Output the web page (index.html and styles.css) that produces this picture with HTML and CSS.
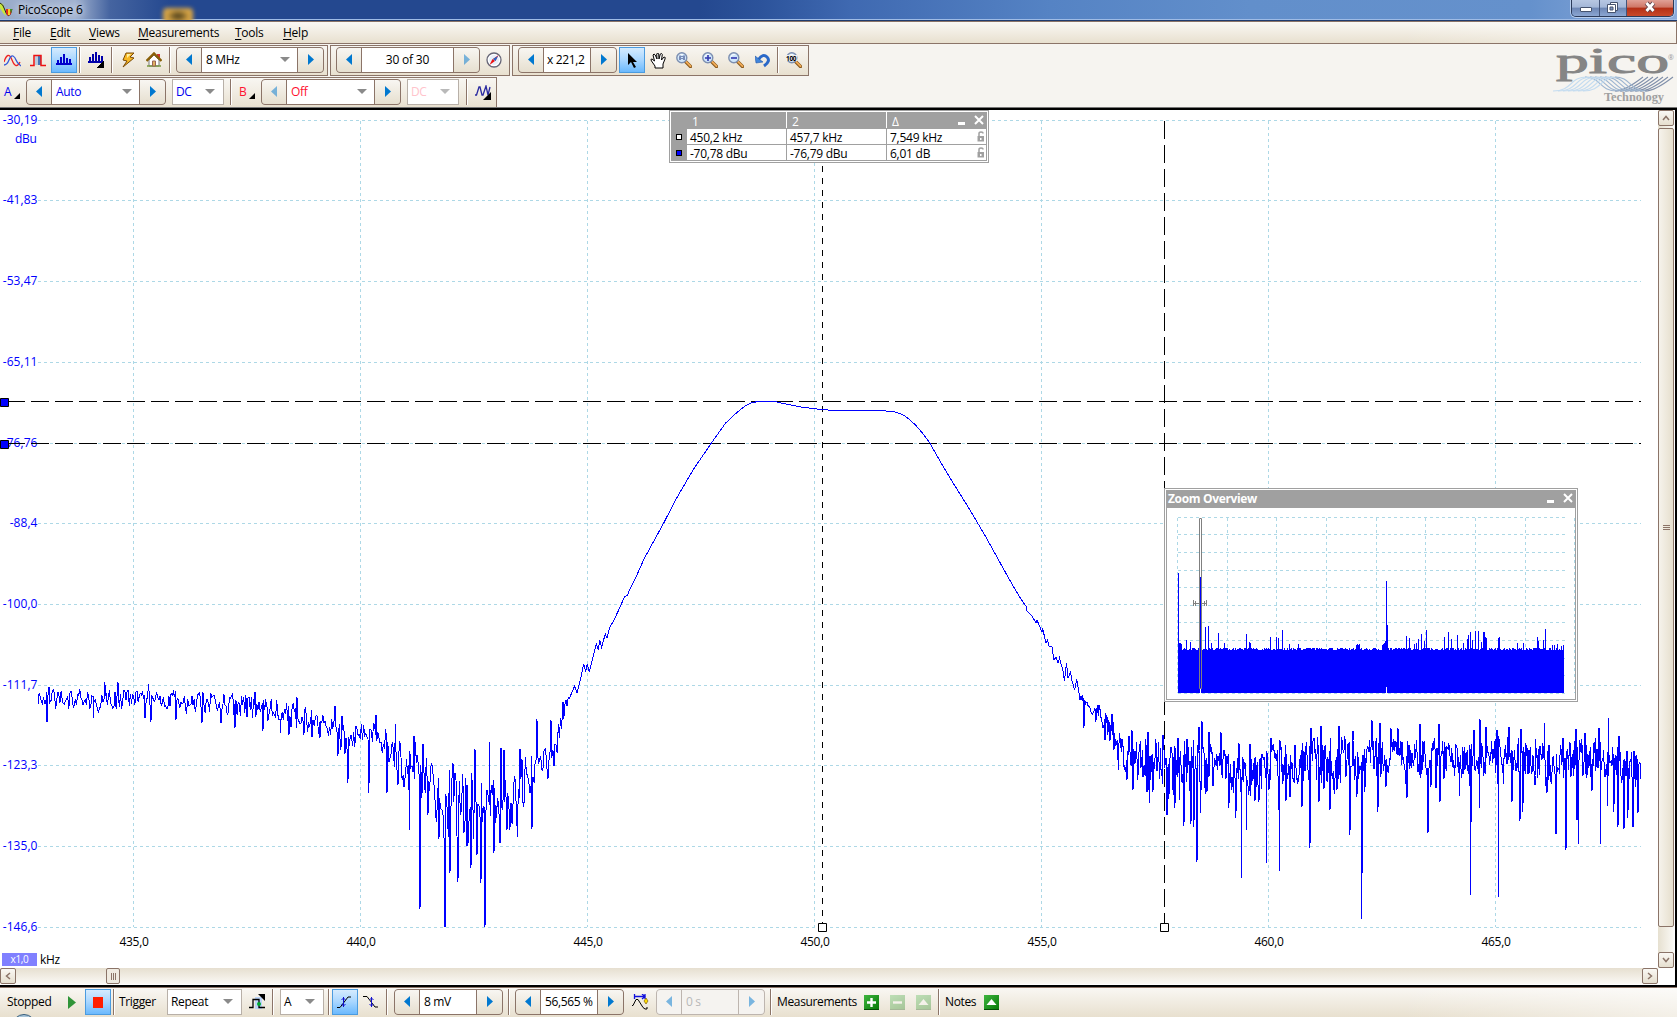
FILE: index.html
```html
<!DOCTYPE html>
<html lang="en">
<head>
  <meta charset="UTF-8">
  <title>PicoScope 6</title>
  <link rel="stylesheet" href="styles.css">
</head>
<body>

  <!-- shared icon shapes -->
  <svg class="defs">
    <symbol id="left" viewBox="0 0 6 11"><path d="M6 0v11L0 5.500z"/></symbol>
    <symbol id="right" viewBox="0 0 6 11"><path d="M0 0v11L6 5.500z"/></symbol>
    <symbol id="lens" viewBox="0 0 16 16">
      <path d="M9.500 9.500l5 5" stroke="#8a5a1c" stroke-width="3.400" stroke-linecap="round"/>
      <path d="M10 9.600l4.500 4.500" stroke="#f2ac58" stroke-width="1.800" stroke-linecap="round"/>
      <circle cx="5.800" cy="5.800" r="5" fill="#cfe6fa" stroke="#7d8fb0" stroke-width="1.400"/>
      <path d="M2.800 5a3.500 3.500 0 0 1 4-2.500" fill="none" stroke="#fff"/>
    </symbol>
    <symbol id="lock" viewBox="0 0 8 11">
      <path d="M2 6V2.500Q2 1 4 1t2 1.500" fill="none" stroke="#a0a0a0" stroke-width="1.500"/>
      <path d="M.500 5h6.500v5.500H.500z" fill="#a0a0a0"/><path d="M3 7h1.500v2H3z" fill="#fff"/>
    </symbol>
    <symbol id="cross" viewBox="0 0 10 10"><path d="M1 1l8 8M9 1l-8 8" stroke="#fff" stroke-width="2"/></symbol>
  </svg>

  <header class="titlebar">
    <svg class="logo" width="14" height="18" viewBox="0 0 14 18">
      <path d="M0 3l3 1 2 6 1 6-3-3-3-5z" fill="#c8e83c"/><path d="M0 3q3 1 4.500 6T8 15.500 12 9" fill="none" stroke="#222"/>
      <path d="M6 9h6l-1 5-3 2-2-3z" fill="#e02818"/><path d="M8 9h2v6H8z" fill="#f5d020"/><path d="M10 9h2l-1 5z" fill="#28a020"/>
    </svg>
    <span class="app-name">PicoScope 6</span>
    <span class="blob"></span>
    <div class="win-buttons">
      <span class="wb min"><i></i></span>
      <span class="wb max"><svg width="14" height="13" viewBox="0 0 14 13"><path d="M4.500 1.500h7v8h-7z" fill="#fff" stroke="#46536e"/><path d="M1.500 3.500h8v8h-8z" fill="#fff" stroke="#46536e"/><path d="M4 6h3v3H4z" fill="#7f95bd" stroke="#46536e"/></svg></span>
      <span class="wb close"><svg width="14" height="12" viewBox="0 0 14 12"><path d="M3.500 2l7 8M10.500 2l-7 8" stroke="#5d4048" stroke-width="4.600"/><path d="M3.500 2l7 8M10.500 2l-7 8" stroke="#fff" stroke-width="2.800"/></svg></span>
    </div>
  </header>

  <nav class="menu">
    <span class="m-file"><u>F</u>ile</span>
    <span class="m-edit"><u>E</u>dit</span>
    <span class="m-views"><u>V</u>iews</span>
    <span class="m-meas"><u>M</u>easurements</span>
    <span class="m-tools"><u>T</u>ools</span>
    <span><u>H</u>elp</span>
  </nav>

  <div class="tools">
    <div class="row">
      <div class="bar bar-modes">
        <span class="btn first"><svg width="17" height="13" viewBox="0 0 17 13" fill="none" stroke-width="1.300"><path d="M0 8Q4-4 8 6t8 2" stroke="#e22"/><path d="M0 11Q3 11 5 6t4-4 3 4 5 6" stroke="#3358d8"/></svg></span>
        <span class="btn"><svg width="16" height="13" viewBox="0 0 16 13"><path d="M5 2h3v9H5z" fill="#bcd"/><path d="M8 2h3v9H8z" fill="#4674b8"/><path d="M0 11.500h4v-10h7v10h5" fill="none" stroke="#e11" stroke-width="1.500"/></svg></span>
        <span class="btn on"><svg class="crisp" width="16" height="12" viewBox="0 0 16 12" fill="#00c"><path d="M0 9h16v2H0zM1 6h2v4H1zM4 3h2v7H4zM7 0h2v10H7zM10 4h2v6h-2zM13 5h2v5h-2z"/></svg></span>
        <i class="sep"></i>
        <span class="btn"><svg class="crisp" width="16" height="16" viewBox="0 0 16 16" fill="#00a"><path d="M0 9h15v2H0zM1 5h2v5H1zM4 2h2v8H4zM7 0h2v10H7zM10 3h2v7h-2zM13 4h2v5h-2z"/><path d="M16 8v8H8z" fill="#000"/></svg></span>
        <i class="sep"></i>
        <span class="btn"><svg width="14" height="16" viewBox="0 0 14 16"><path d="M5 1h8L9 5l4 1-11 9 4-6-4-1z" fill="#f6b824" stroke="#7a4a08"/><path d="M6 2h4L6 6z" fill="#fff0a0"/></svg></span>
        <span class="btn"><svg width="16" height="16" viewBox="0 0 16 16"><path d="M11 2h3v5h-3z" fill="#c33"/><path d="M3 8l5-5 5 5v6H3z" fill="#fff" stroke="#777"/><path d="M.500 9L8 1.500 15.500 9" fill="none" stroke="#8a6008" stroke-width="2.400"/><path d="M1 14h14" stroke="#7a9a40" stroke-width="1.500"/><path d="M6.500 9h3v5h-3z" fill="#e0b060" stroke="#965"/></svg></span>
        <i class="sep"></i>
        <div class="spin w148"><b><svg class="ar"><use href="#left"/></svg></b><span class="val">8 MHz<i class="drop"></i></span><b><svg class="ar"><use href="#right"/></svg></b></div>
      </div>
      <div class="bar bar-pages">
        <div class="spin w144"><b><svg class="ar"><use href="#left"/></svg></b><span class="val page">30 of 30</span><b class="off"><svg class="ar"><use href="#right"/></svg></b></div>
        <span class="btn compass"><svg width="16" height="16" viewBox="0 0 16 16"><circle cx="8" cy="8" r="7" fill="#fff" stroke="#667" stroke-width="1.300"/><circle cx="8" cy="8" r="5" fill="#e6effa"/><path d="M12.500 3L9.500 9 7 7z" fill="#e11"/><path d="M3.500 13L6.500 7 9 9z" fill="#e11"/><path d="M7 7l2.500 2L12 4z" fill="#26c"/></svg></span>
      </div>
      <div class="bar bar-zoom">
        <div class="spin w99"><b><svg class="ar"><use href="#left"/></svg></b><span class="val tight">x 221,2</span><b><svg class="ar"><use href="#right"/></svg></b></div>
        <span class="btn on"><svg width="11" height="17" viewBox="0 0 11 17"><path d="M1 1v12l3-3 3 6 2-1-3-5h4z"/></svg></span>
        <span class="btn"><svg width="17" height="17" viewBox="0 0 17 17"><path d="M5 16v-2L1.500 9Q0 7 2 7l2.500 2L3 3q1-2 2.200 0L7 7 6.700 2q1-2 2 0L9 7l1.300-5q1.500-1.300 2 .500L11.500 8 14 5q2 0 1 2l-2 5v4z" fill="#fff" stroke="#000"/></svg></span>
        <span class="btn"><svg width="16" height="16"><use href="#lens"/><path d="M4 3.500v4.500M8 3.500v4.500" stroke="#237"/><path d="M5.500 4.500h1M5.500 6.500h1" stroke="#237"/></svg></span>
        <span class="btn"><svg width="16" height="16"><use href="#lens"/><path d="M3 6h6M6 3v6" stroke="#3338b0" stroke-width="1.600"/></svg></span>
        <span class="btn"><svg width="16" height="16"><use href="#lens"/><path d="M3 6h6" stroke="#3338b0" stroke-width="1.600"/></svg></span>
        <span class="btn"><svg width="15" height="15" viewBox="0 0 15 15"><path d="M3.500 6.500Q8 0 12 4t-3 9" fill="none" stroke="#2a68c8" stroke-width="3"/><path d="M0 3l1 7 7-1z" fill="#3f85dc" stroke="#2458a8" stroke-width=".600"/></svg></span>
        <i class="sep"></i>
        <span class="btn"><svg width="16" height="16"><use href="#lens"/><path d="M0 3h11v6H0z" fill="#eee"/><text x="0" y="8.500" class="hundred">100</text></svg></span>
      </div>
    </div>
    <div class="row">
      <div class="bar bar-channels">
        <span class="chan blue">A<i class="corner"></i></span>
        <div class="spin w140 blue"><b><svg class="ar"><use href="#left"/></svg></b><span class="val">Auto<i class="drop"></i></span><b><svg class="ar"><use href="#right"/></svg></b></div>
        <span class="combo w52 blue">DC<i class="drop"></i></span>
        <i class="sep"></i>
        <span class="chan chan-b red">B<i class="corner"></i></span>
        <div class="spin w140 red"><b class="off"><svg class="ar"><use href="#left"/></svg></b><span class="val">Off<i class="drop"></i></span><b><svg class="ar"><use href="#right"/></svg></b></div>
        <span class="combo w52 faded">DC<i class="drop"></i></span>
        <i class="sep sep-wide"></i>
        <span class="btn"><svg width="17" height="15" viewBox="0 0 17 15"><path d="M0 10h1.500L4 2h1l2 8h1l3-9 2 9 2-8" fill="none" stroke="#2a2aa0" stroke-width="1.300"/><path d="M16 7v8H8z"/></svg></span>
      </div>
    </div>
    <div class="brand">
      <svg width="124" height="58" viewBox="0 0 124 58">
        <text x="3" y="25" class="brand-name" textLength="113" lengthAdjust="spacingAndGlyphs">pico</text>
        <text x="115" y="12" class="brand-reg">®</text>
        <g id="waves" fill="none" stroke-width="1.100"></g>
        <text x="51" y="53" class="brand-sub" textLength="60" lengthAdjust="spacingAndGlyphs">Technology</text>
      </svg>
    </div>
  </div>

  <main class="scope">
    <svg id="chart" class="chart" width="1658" height="858" viewBox="0 110 1658 858"></svg>
    <div class="vscroll">
      <span class="sbtn"><svg width="8" height="6" viewBox="0 0 8 6"><path d="M1 5l3-3.500L7 5"/></svg></span>
      <span class="vthumb"><i></i><i></i><i></i></span>
      <span class="vgap"></span>
      <span class="sbtn"><svg width="8" height="6" viewBox="0 0 8 6"><path d="M1 1l3 3.500L7 1"/></svg></span>
    </div>
    <div class="hscroll">
      <span class="sbtn"><svg width="6" height="8" viewBox="0 0 6 8"><path d="M5 1L1.500 4 5 7"/></svg></span>
      <span class="hthumb"><i></i><i></i><i></i></span>
      <span class="sbtn end"><svg width="6" height="8" viewBox="0 0 6 8"><path d="M1 1l3.500 3L1 7"/></svg></span>
    </div>

    <div class="panel rulers">
      <div class="ruler-grid">
        <span class="h"></span><span class="h">1</span><span class="h line">2</span><span class="h line">Δ</span>
        <span class="h"><i class="mark"></i></span><span>450,2 kHz</span><span>457,7 kHz</span><span>7,549 kHz<svg class="lock"><use href="#lock"/></svg></span>
        <span class="h"><i class="mark filled"></i></span><span>-70,78 dBu</span><span>-76,79 dBu</span><span>6,01 dB<svg class="lock"><use href="#lock"/></svg></span>
      </div>
      <i class="p-min"></i><svg class="p-close"><use href="#cross"/></svg>
    </div>

    <div class="panel overview">
      <div class="p-title">Zoom Overview</div>
      <i class="p-min"></i><svg class="p-close"><use href="#cross"/></svg>
      <svg id="overview" class="over-chart" width="408" height="191" viewBox="1167 508 408 191"></svg>
    </div>
  </main>

  <footer class="status">
    <span class="t-stopped">Stopped</span>
    <span class="btn"><svg width="8" height="13" viewBox="0 0 8 13"><path d="M0 0l8 6.500L0 13z" fill="#2f9438"/></svg></span>
    <span class="btn on"><i class="stop"></i></span>
    <i class="sep"></i>
    <span class="t-trigger">Trigger</span>
    <span class="combo w75">Repeat<i class="drop"></i></span>
    <span class="btn trig"><svg width="17" height="16" viewBox="0 0 17 16"><path d="M6 3h7v12H6z" fill="#bcd4f8"/><path d="M0 13.500h4v-8h6v8h6" fill="none" stroke="#000" stroke-width="1.300"/><circle cx="10" cy="10" r="2" fill="#0a3"/><path d="M9 0h7v7z"/></svg></span>
    <i class="sep"></i>
    <span class="combo w44">A<i class="drop"></i></span>
    <i class="sep sep-a"></i>
    <span class="btn on"><svg width="16" height="14" viewBox="0 0 16 14"><path d="M0 12.500h3L11 2h3" fill="none" stroke="#000"/><path d="M6.500 2v10M4.500 5l2-2 2 2M4.500 9l2 2 2-2" fill="none" stroke="#11c"/></svg></span>
    <span class="btn"><svg width="16" height="14" viewBox="0 0 16 14"><path d="M0 1.500h4L12 12h3" fill="none" stroke="#000"/><path d="M8.500 2v10M6.500 5l2-2 2 2M6.500 9l2 2 2-2" fill="none" stroke="#11c"/></svg></span>
    <i class="sep"></i>
    <div class="spin w109 level"><b><svg class="ar"><use href="#left"/></svg></b><span class="val">8 mV</span><b><svg class="ar"><use href="#right"/></svg></b></div>
    <i class="sep"></i>
    <div class="spin w109"><b><svg class="ar"><use href="#left"/></svg></b><span class="val tight">56,565 %</span><b><svg class="ar"><use href="#right"/></svg></b></div>
    <span class="btn delay"><svg width="17" height="16" viewBox="0 0 17 16"><path d="M2.500 0v5M13 0v5M2 2.500h11M10 0l3 2.500-3 2.500" fill="none" stroke="#11d" stroke-width="1.300"/><path d="M0 11.500h1L4 5.500h2l5 8 2 1.500h2v-2" fill="none" stroke="#000"/><path d="M14 4l2 3-2 3-2-3z" fill="#fd0" stroke="#640" stroke-width=".600"/></svg></span>
    <div class="spin w109 disabled"><b class="off"><svg class="ar"><use href="#left"/></svg></b><span class="val">0 s</span><b class="off"><svg class="ar"><use href="#right"/></svg></b></div>
    <i class="sep"></i>
    <span class="t-meas">Measurements</span>
    <span class="btn"><i class="green"><svg width="15" height="15"><path d="M7.500 3v9M3 7.500h9" stroke="#fff" stroke-width="2.400"/></svg></i></span>
    <span class="btn"><i class="green dim"><svg width="15" height="15"><path d="M3 7.500h9" stroke="#fff" stroke-width="2.400"/></svg></i></span>
    <span class="btn"><i class="green dim"><svg width="15" height="15"><path d="M7.500 4l5 6h-10z" fill="#fff"/></svg></i></span>
    <i class="sep"></i>
    <span class="t-notes">Notes</span>
    <span class="btn"><i class="green"><svg width="15" height="15"><path d="M7.500 4l5 6h-10z" fill="#fff"/></svg></i></span>
    <i class="orb"></i>
  </footer>

  <script src="chart.js"></script>
</body>
</html>
```
FILE: styles.css
```css
* {
  box-sizing: border-box;
}

body {
  margin: 0;
  width: 1677px;
  height: 1017px;
  overflow: hidden;
  font-family: "Open Sans", "Noto Sans", sans-serif;
  font-size: 12px;
  letter-spacing: -0.35px;
  color: #000;
  background: #f6f4f0;
  display: flex;
  flex-direction: column;
}

i {
  font-style: normal;
}

.defs {
  display: none;
}

svg {
  display: block;
}

.crisp {
  shape-rendering: crispEdges;
}

/* title bar */
.titlebar {
  position: relative;
  flex: none;
  height: 21px;
  display: flex;
  align-items: flex-start;
  overflow: hidden;
  background: linear-gradient(90deg, #9aacca 0, #a0b1cf 75px, #4564a0 110px, #24488f 170px, #24488f 700px, #2c539b 760px, #3f69b1 850px, #5583c4 1050px, #628fcb 1250px, #6591cc 1530px, #8dabdb 1677px);
  border-bottom: 1px solid #1f3b6e;
  box-shadow: inset 0 -1px 0 #9fbce6;
}

.logo {
  flex: none;
}

.app-name {
  margin-left: 4px;
  line-height: 19px;
  letter-spacing: -0.2px;
  text-shadow: 0 0 6px #dce4f2, 0 0 10px #dce4f2;
}

.blob {
  width: 30px;
  height: 16px;
  margin: 8px 0 0 80px;
  border-radius: 4px;
  background: radial-gradient(#5c4a20 15%, #d8a545 55%);
  filter: blur(2px);
}

.win-buttons {
  display: flex;
  margin-left: auto;
  margin-right: 3px;
  height: 17px;
  width: 103px;
  border: 1px solid #2c3b5a;
  border-top: 0;
  border-radius: 0 0 5px 5px;
  box-shadow: 0 0 0 1px #b8cdec;
  overflow: hidden;
}

.wb {
  display: flex;
  align-items: center;
  justify-content: center;
  width: 28px;
  padding-bottom: 2px;
  background: linear-gradient(#b7c7e2 0, #a4b7d8 45%, #6d86b4 50%, #8ba6d2 100%);
  border-right: 1px solid #44557a;
}

.wb.max {
  width: 27px;
}

.wb.min i {
  width: 12px;
  height: 5px;
  margin-top: 4px;
  background: #fff;
  border: 1px solid #46536e;
  border-radius: 1px;
}

.wb.close {
  flex: 1;
  border: 0;
  background: linear-gradient(#e0a197 0, #cf7666 45%, #b32f16 50%, #c9492a 100%);
}

/* menu */
.menu {
  flex: none;
  display: flex;
  width: 1677px;
  height: 23px;
  padding-left: 13px;
  line-height: 22px;
  letter-spacing: -0.25px;
  border: 1px solid #8b7468;
  border-left: 0;
  background: linear-gradient(90deg, transparent 1400px, rgba(255, 255, 255, 0.5)), linear-gradient(#faf8f4, #e8e0cf);
}

.menu span {
  margin-right: 15px;
}

.menu .m-file {
  width: 22px;
}

.menu .m-edit {
  width: 24px;
}

.menu .m-views {
  width: 34px;
}

.menu .m-meas {
  width: 82px;
}

.menu .m-tools {
  width: 33px;
}

.menu u {
  text-underline-offset: 2px;
}

/* toolbars */
.tools {
  position: relative;
  flex: none;
  height: 64px;
  padding-top: 1px;
}

.row {
  display: flex;
  gap: 2px;
  height: 32px;
}

.bar {
  display: flex;
  align-items: center;
  height: 31px;
  padding-bottom: 1px;
  border: 1px solid #8b7468;
  background: linear-gradient(#f8f6f2, #f1ece2 50%, #e8e0cf);
}

.bar-modes {
  width: 328px;
  border-left: 0;
}

.bar-modes .first {
  margin-left: -1px;
}

.bar-modes .spin {
  margin-left: 3px;
}

.bar-pages {
  width: 180px;
  padding-left: 5px;
}

.bar-zoom {
  width: 297px;
  padding-left: 5px;
}

.bar-zoom .spin {
  margin-right: 2px;
}

.bar-channels {
  width: 497px;
  border-left: 0;
}

.btn {
  flex: none;
  width: 26px;
  height: 26px;
  display: flex;
  align-items: center;
  justify-content: center;
}

.btn.on {
  border: 1px solid #4b9bdf;
  background: linear-gradient(#d5ebfe, #a8d6ff 50%, #6bb9fd);
}

.compass {
  margin-left: 1px;
}

.sep {
  flex: none;
  width: 6px;
  height: 26px;
  background: linear-gradient(90deg, transparent 2px, #8b7468 2px, #8b7468 3px, #fff 3px, #fff 4px, transparent 4px);
}

.spin {
  flex: none;
  display: flex;
  height: 26px;
  border: 1px solid #8b7468;
  border-radius: 4px;
  background: #8b7468;
  overflow: hidden;
}

.spin b {
  width: 25px;
  display: flex;
  align-items: center;
  justify-content: center;
  padding-bottom: 1px;
  background: linear-gradient(#f8f6f2, #e6dfcf);
}

.spin b:first-child {
  width: 24px;
}

.spin b.off .ar {
  opacity: 0.5;
}

.spin .val {
  flex: 1;
  display: flex;
  align-items: center;
  margin: 0 1px;
  padding: 0 7px 1px 4px;
  background: #fff;
  white-space: nowrap;
}

.spin .val.page {
  justify-content: center;
  padding: 0 0 1px;
  letter-spacing: -0.2px;
}

.spin .val.tight {
  padding: 0 0 1px 3px;
}

.ar {
  width: 6px;
  height: 11px;
  fill: #0078d0;
}

.w148 { width: 148px; }
.w144 { width: 144px; }
.w140 { width: 140px; }
.w109 { width: 109px; }
.w99 { width: 99px; }
.w75 { width: 75px; }
.w52 { width: 52px; }
.w44 { width: 44px; }

.drop {
  margin-left: auto;
  border: 5px solid transparent;
  border-top-color: #8a8a8a;
  border-bottom: 0;
}

.combo {
  flex: none;
  display: flex;
  align-items: center;
  height: 26px;
  padding: 0 8px 1px 3px;
  background: #fff;
  border: 1px solid #b8b0a8;
}

.bar-channels .combo {
  margin: 0 4px 0 6px;
}

.blue {
  color: #0000f0;
}

.red {
  color: #ff1030;
}

.faded {
  color: #ffc4cc;
}

.faded .drop {
  opacity: 0.6;
}

.disabled {
  border-color: #bdb5af;
  background: #bdb5af;
  color: #b8b8b8;
}

.disabled .val,
.disabled b {
  background: #f5f3f0 !important;
}

.chan {
  display: flex;
  align-items: center;
  width: 26px;
  height: 26px;
  padding: 0 0 1px 4px;
}

.chan-b {
  width: 27px;
  padding-left: 5px;
}

.corner {
  margin: 9px 0 0 3px;
  border: 3px solid #000;
  border-top-color: transparent;
  border-left-color: transparent;
}

.bar-channels .sep-wide {
  margin-left: 1px;
}

.hundred {
  font-size: 6.5px;
  font-weight: bold;
  letter-spacing: -0.3px;
}

.brand {
  position: absolute;
  right: 0;
  top: 4px;
}

.brand-name {
  font-family: "Liberation Serif", serif;
  font-size: 35px;
  letter-spacing: 0;
  fill: #858585;
  stroke: #858585;
  stroke-width: 0.9;
}

.brand-reg {
  font-size: 7px;
  fill: #999;
}

.brand-sub {
  font-family: "Liberation Serif", serif;
  font-size: 12px;
  font-weight: bold;
  letter-spacing: 0;
  fill: #a0a0a0;
}

/* scope view */
.scope {
  position: relative;
  flex: none;
  display: grid;
  grid-template-columns: 1658px 16px;
  grid-template-rows: 858px 16px;
  height: 879px;
  width: 1677px;
  border-top: 2px solid #000;
  border-right: 2px solid #000;
  border-bottom: 2px solid #000;
  background: #fff;
  box-shadow: 0 -1px 0 #777;
}

.chart text {
  letter-spacing: -0.3px;
}

.chart .y-label {
  letter-spacing: 0.05px;
}

.chart .badge-text {
  font-size: 10px;
  fill: #fff;
}

.vscroll {
  display: flex;
  flex-direction: column;
  background: linear-gradient(90deg, #e6e0d0, #fbfaf6);
}

.sbtn {
  flex: none;
  width: 16px;
  height: 16px;
  display: flex;
  align-items: center;
  justify-content: center;
  border: 1px solid #8b7468;
  border-radius: 2px;
  background: linear-gradient(#faf8f4, #e6dfcf);
}

.sbtn path {
  fill: none;
  stroke: #8b7468;
  stroke-width: 1.500;
}

.vthumb {
  margin-top: 2px;
  height: 799px;
  display: flex;
  flex-direction: column;
  gap: 1px;
  align-items: center;
  justify-content: center;
  border: 1px solid #8b7468;
  border-radius: 2px;
  background: linear-gradient(90deg, #f6f3ec, #e6dfcd);
}

.vthumb i {
  width: 7px;
  height: 1px;
  background: #8b7468;
}

.vgap {
  flex: 1;
}

.hscroll {
  display: flex;
  background: linear-gradient(#e6dfd0, #fbf9f5);
}

.hthumb {
  width: 14px;
  margin-left: 90px;
  display: flex;
  align-items: center;
  justify-content: center;
  gap: 1px;
  border: 1px solid #8b7468;
  border-radius: 2px;
  background: #f0ebe1;
}

.hthumb i {
  width: 1px;
  height: 7px;
  background: #8b7468;
}

.sbtn.end {
  margin-left: auto;
}

/* floating panels */
.panel {
  position: absolute;
  border: 1px solid #a0a0a0;
  background: #fff;
  padding: 1px;
}

.rulers {
  left: 669px;
  top: 0;
  width: 320px;
  height: 53px;
}

.ruler-grid {
  display: grid;
  grid-template-columns: 15px 99px 99px 99px;
  grid-template-rows: 16px 15px 15px;
  gap: 1px;
  height: 49px;
  padding-bottom: 1px;
  background: #a0a0a0;
}

.ruler-grid span {
  position: relative;
  padding-left: 3px;
  line-height: 17px;
  letter-spacing: -0.25px;
  background: #fff;
}

.ruler-grid .h {
  background: #a0a0a0;
  color: #fff;
  padding-left: 5px;
  line-height: 19px;
}

.ruler-grid .line {
  margin-left: -1px;
  border-left: 1px solid #fff;
}

.mark {
  position: absolute;
  left: 5px;
  top: 5px;
  width: 6px;
  height: 6px;
  background: #fff;
  border: 1px solid #000;
}

.mark.filled {
  background: #00f;
}

.lock {
  position: absolute;
  right: 1px;
  top: 2px;
  width: 8px;
  height: 11px;
}

.p-min {
  position: absolute;
  right: 23px;
  top: 11px;
  width: 7px;
  height: 3px;
  background: #fff;
}

.p-close {
  position: absolute;
  right: 4px;
  top: 4px;
  width: 10px;
  height: 10px;
}

.overview {
  left: 1164px;
  top: 378px;
  width: 414px;
  height: 214px;
}

.p-title {
  height: 18px;
  padding-left: 2px;
  line-height: 17px;
  font-weight: bold;
  letter-spacing: -0.35px;
  color: #fff;
  background: #a0a0a0;
}

.over-chart {
  width: 410px;
  height: 192px;
  border: 1px solid #a0a0a0;
  border-top: 0;
}

/* bottom bar */
.status {
  position: relative;
  flex: none;
  display: flex;
  align-items: center;
  height: 30px;
  padding: 0 0 1px 7px;
  border-top: 1px solid #8b7468;
  background: linear-gradient(90deg, transparent 1400px, rgba(255, 255, 255, 0.5)), linear-gradient(#f9f7f3, #e8e0cf);
}

.t-stopped {
  width: 52px;
  padding-bottom: 1px;
}

.t-trigger {
  width: 49px;
  padding: 0 0 1px 2px;
  margin-right: 1px;
}

.trig {
  margin-left: 2px;
}

.status .w44 {
  margin-left: 4px;
}

.sep-a {
  margin-left: 2px;
}

.status .spin {
  margin: 0 3px;
}

.status .delay {
  margin: 0;
}

.status .level {
  margin-left: 4px;
}

.status .spin .val {
  padding-left: 4px;
}

.stop {
  width: 10px;
  height: 11px;
  background: #ff1e00;
}

.t-meas {
  width: 84px;
  padding: 0 0 1px 3px;
}

.t-notes {
  width: 36px;
  padding: 0 0 1px 3px;
}

.green {
  width: 15px;
  height: 15px;
  background: linear-gradient(135deg, #3fb53f, #087a08);
  border-bottom: 1px solid #054d05;
}

.green.dim {
  opacity: 0.3;
}

.orb {
  position: absolute;
  left: 12px;
  top: 26px;
  width: 24px;
  height: 24px;
  border: 1px solid #345c7c;
  border-radius: 50%;
  background: #a8c4d8;
}
```
FILE: chart.js
```js
const chart = document.getElementById("chart");
const overview = document.getElementById("overview");

let seed = 20;
function rand() {
  seed = (seed * 16807) % 2147483647;
  return seed / 2147483647;
}

function line(x1, y1, x2, y2, color, dash) {
  return `<path d="M${x1} ${y1}L${x2} ${y2}" stroke="${color}" stroke-dasharray="${dash}" shape-rendering="crispEdges"/>`;
}

// linear interpolation in an envelope of [x, top, bottom]
function envelope(rows, x) {
  let i = 1;
  while (i < rows.length - 1 && rows[i][0] < x) i++;
  const a = rows[i - 1], b = rows[i];
  const t = (x - a[0]) / (b[0] - a[0]);
  return [a[1] + (b[1] - a[1]) * t, a[2] + (b[2] - a[2]) * t];
}

function noise(rows, spikes, step, low) {
  const out = [];
  const start = rows[0][0], end = rows[rows.length - 1][0];
  let k = 0;
  for (let x = start; x <= end; x += step) {
    const [top, bottom] = envelope(rows, x);
    // now and then a deeper dip
    const reach = rand() < 0.12 ? low : 1;
    out.push([x, top + (bottom - top) * rand() * reach]);
    while (k < spikes.length && spikes[k][0] < x + step) {
      out.push(spikes[k]);
      k++;
    }
  }
  return out;
}

const leftRows = [
  [38, 689, 710], [150, 690, 709], [200, 691, 713], [240, 693, 719], [260, 698, 720], [290, 701, 728],
  [320, 712, 735], [335, 718, 742], [345, 722, 757], [352, 730, 757], [358, 722, 740], [375, 720, 745],
  [390, 730, 765], [405, 738, 785], [415, 740, 795], [430, 760, 805], [440, 768, 825], [450, 768, 840],
  [470, 772, 845], [490, 762, 830], [500, 765, 825], [515, 768, 820], [525, 755, 805], [535, 748, 785],
  [545, 745, 780], [556, 730, 765], [560, 712, 740], [565, 700, 714], [570, 692, 706]
];
const leftSpikes = [
  [47, 722], [49, 687], [93, 718], [105, 682], [118, 682], [145, 718], [148, 684], [151, 722], [176, 720],
  [202, 723], [221, 723], [235, 728], [255, 692], [263, 731], [280, 733], [289, 735], [297, 697], [304, 735],
  [312, 737], [320, 738], [335, 706], [338, 756], [342, 716], [348, 783], [369, 793], [376, 715], [387, 793],
  [395.5, 724], [398, 785], [404, 787], [409.5, 830], [414, 736], [420, 909], [423, 744], [428, 815],
  [439, 839], [445, 927], [450, 873], [453, 763], [458, 882], [464, 832], [467, 846], [471, 868], [475, 749],
  [477, 855], [481, 883], [485, 927], [489.5, 742], [494, 853], [500, 843], [501, 748], [504, 750], [507, 830],
  [517.5, 837], [520, 749], [532, 829], [537, 719], [548, 779], [551, 720], [554, 766], [563, 702]
];
const slope = [
  [574.7, 686], [577, 693], [581, 677], [583.7, 664], [585.7, 672], [587.3, 664], [589.4, 672], [593, 657],
  [596.3, 644], [598.4, 650], [599.6, 640], [601.6, 647], [605.3, 634], [607, 638], [609.4, 628], [614, 620],
  [619.6, 608], [624.5, 597], [627.8, 595], [629, 591], [636, 577], [644, 559], [663.7, 523], [676.7, 498],
  [693, 470], [711.4, 443], [725.7, 423], [733, 416], [740, 410], [746, 405.5], [752, 402.7], [758, 401.5],
  [774.7, 401.5], [787, 404.3], [803, 407.3], [819.6, 409.3], [831.8, 410.3], [880.8, 410.5], [895, 412],
  [900, 413.5], [905, 416], [910, 420], [915.5, 425], [922, 432.5], [929.8, 443], [940, 461], [950, 478],
  [960, 494], [970.6, 511], [987, 539], [1003, 568], [1011.4, 583], [1019.6, 597], [1026.5, 607], [1027, 611],
  [1032, 616], [1036, 623], [1037, 620], [1042, 632], [1042.5, 628], [1046, 643], [1047.5, 640], [1049, 646],
  [1052, 647], [1054, 660], [1056, 657], [1058, 663], [1059.5, 658], [1063, 671], [1064.5, 681], [1066.5, 663],
  [1068, 678], [1070.6, 672], [1072, 681], [1074.7, 690], [1076.7, 679], [1079, 693]
];
const rightRows = [
  [1080, 691, 701], [1090, 698, 712], [1100, 706, 724], [1110, 716, 742], [1120, 731, 762], [1130, 736, 780],
  [1150, 738, 785], [1200, 740, 782], [1225, 744, 778], [1235, 754, 798], [1255, 757, 796], [1270, 745, 787],
  [1300, 742, 782], [1320, 734, 784], [1360, 737, 782], [1400, 739, 773], [1430, 738, 782], [1470, 740, 778],
  [1500, 735, 774], [1540, 738, 780], [1560, 745, 780], [1590, 736, 778], [1615, 743, 785], [1641, 756, 790]
];
const rightSpikes = [
  [1084, 728], [1096, 722], [1099, 705], [1105, 740], [1107, 716], [1110, 741], [1112, 714], [1114, 750],
  [1127, 780], [1132, 730], [1133, 790], [1147, 792], [1148, 732], [1153, 792], [1163, 735], [1167, 815],
  [1175, 808], [1178, 738], [1184, 826], [1187, 739], [1191, 824], [1194, 827], [1197, 862], [1199, 727],
  [1200.5, 813], [1202, 721], [1207, 792], [1209, 732], [1213, 786], [1221, 732], [1229, 808], [1236, 818],
  [1239, 743], [1241.5, 878], [1246.6, 830], [1250, 744], [1259, 802], [1266.6, 863], [1271, 738], [1279.5, 871],
  [1280, 740], [1286, 801], [1290, 797], [1295, 745], [1302, 807], [1310, 848], [1311, 728], [1319, 802],
  [1321, 726], [1324, 789], [1330, 810], [1337, 790], [1339, 726], [1350, 835], [1353, 731], [1357, 797],
  [1361.8, 919], [1362.6, 873], [1372, 720], [1378, 812], [1380, 723], [1386, 787], [1391, 728], [1398, 728],
  [1407, 798], [1420, 724], [1428, 833], [1436, 788], [1439, 724], [1440, 802], [1459.6, 796], [1470.3, 895],
  [1471.5, 822], [1474, 730], [1479.6, 808], [1480, 719], [1486, 727], [1497, 730], [1498.5, 897], [1509, 727],
  [1512, 802], [1520, 821], [1521, 729], [1523, 812], [1535, 785], [1544.6, 723], [1547, 793], [1556, 834],
  [1563, 738], [1566, 850], [1576, 729], [1577, 820], [1578.5, 844], [1585, 733], [1592, 791], [1599, 728],
  [1600.5, 844], [1607.5, 806], [1608.5, 718], [1614, 812], [1618, 827], [1619, 736], [1624, 829], [1627, 751],
  [1628, 818], [1633, 827], [1634, 751], [1638, 813]
];

let html = "";

// grid
const yLabels = ["-30,19", "-41,83", "-53,47", "-65,11", "-76,76", "-88,4", "-100,0", "-111,7", "-123,3", "-135,0", "-146,6"];
yLabels.forEach((label, i) => {
  const y = Math.floor(120.2 + i * 80.7) + 0.5;
  html += line(38, y, 1641, y, "#add8e6", "3 3");
  html += `<text class="y-label" x="37.500" y="${y + 3.5}" text-anchor="end" fill="#00f">${label}</text>`;
});
for (let i = 0; i < 7; i++) {
  const x = Math.floor(133.5 + i * 226.95) + 0.5;
  html += line(x, 121, x, 927, "#add8e6", "3 3");
  html += `<text x="${x + 0.5}" y="946" text-anchor="middle">${435 + i * 5},0</text>`;
}
html += `<text x="15" y="143" fill="#00f">dBu</text>`;
html += `<path d="M2 953h35v13H2z" fill="#8080ff"/><text x="19.500" y="963" text-anchor="middle" class="badge-text">x1,0</text>`;
html += `<text x="40" y="964">kHz</text>`;

// rulers
html += line(7, 401.5, 1641, 401.5, "#000", "18 6");
html += line(7, 443.5, 1641, 443.5, "#000", "18 6");
html += line(822.5, 118, 822.5, 923, "#000", "6 6");
html += line(1164.5, 121, 1164.5, 923, "#000", "18 6");

// trace
const points = [...noise(leftRows, leftSpikes, 1.1, 1.15), ...slope, ...noise(rightRows, rightSpikes, 0.7, 1.4)];
html += `<path d="M${points.map(p => p[0].toFixed(1) + " " + p[1].toFixed(1)).join("L")}" fill="none" stroke="#00f" stroke-width="1" shape-rendering="crispEdges"/>`;

for (const x of [822.5, 1164.5]) {
  html += `<path d="M${x - 4} 923.500h8v8h-8z" fill="#fff" stroke="#000"/>`;
}
for (const y of [398.5, 440.5]) {
  html += `<path d="M.500 ${y}h8v8h-8z" fill="#00f" stroke="#000"/>`;
}
chart.innerHTML = html;

// zoom overview: grid, bars, then the zoomed range
let small = "";
for (let i = 0; i <= 10; i++) {
  const y = Math.floor(517.3 + i * 17.6) + 0.5;
  small += line(1178, y, 1565, y, "#add8e6", "3 3");
}
for (let i = 0; i <= 8; i++) {
  const x = Math.floor(1177.3 + i * 49.7) + 0.5;
  small += line(x, 518, x, 693, "#add8e6", "3 3");
}
const peaks = {
  0: 573, 1: 643, 2: 643, 3: 644, 8: 640, 12: 642, 22: 577, 27: 627, 30: 626, 33: 643, 40: 633, 46: 643,
  68: 634, 71: 642, 72: 643, 92: 637, 98: 637, 100: 638, 104: 630, 111: 644, 120: 644, 178: 645, 179: 644,
  180: 645, 181: 644, 204: 645, 205: 644, 206: 643, 207: 641, 208: 581, 209: 625, 228: 636, 231: 638,
  236: 644, 238: 643, 240: 639, 243: 634, 246: 641, 248: 630, 266: 637, 270: 632, 273: 639, 279: 635,
  285: 643, 289: 639, 290: 635, 292: 632, 294: 640, 297: 631, 300: 631, 303: 642, 305: 632, 306: 632,
  307: 637, 308: 638, 320: 638, 321: 637, 339: 643, 345: 643, 359: 637, 360: 641, 365: 640, 367: 629,
  374: 645, 376: 645, 379: 644, 383: 646, 385: 645
};
let bars = "";
for (let i = 0; i < 386; i++) {
  const top = peaks[i] || 648 + Math.floor(rand() * 3);
  bars += `M${1178 + i} ${top}h1V693h-1z`;
}
small += `<path d="${bars}" fill="#00f" shape-rendering="crispEdges"/>`;
small += `<path d="M1199.500 518.500h2v170h-2z" fill="none" stroke="#808080"/>`;
small += `<path d="M1200 689h1v4h-1zM1386 687h1v6h-1z" fill="#fff"/>`;
small += `<path d="M1193.500 600v6M1206.500 600v6M1194 603.500h5M1202 603.500h5M1195.500 601v5M1204.500 601v5" stroke="#808080"/>`;
overview.innerHTML = small;

// logo waves
let waves = "";
for (let i = 0; i < 7; i++) {
  const x = i * 5;
  waves += `<path d="M${x} 43C${x + 20} 43 ${x + 16} 29 ${x + 34} 29" stroke="#c4dcf0"/>`;
  waves += `<path d="M${x + 32} 29C${x + 48} 29 ${x + 46} 43 ${x + 64} 43" stroke="#9db5d0"/>`;
  waves += `<path d="M${x + 62} 43Q${x + 72} 43 ${x + 90} 29" stroke="#8190aa"/>`;
}
document.getElementById("waves").innerHTML = waves;
```
